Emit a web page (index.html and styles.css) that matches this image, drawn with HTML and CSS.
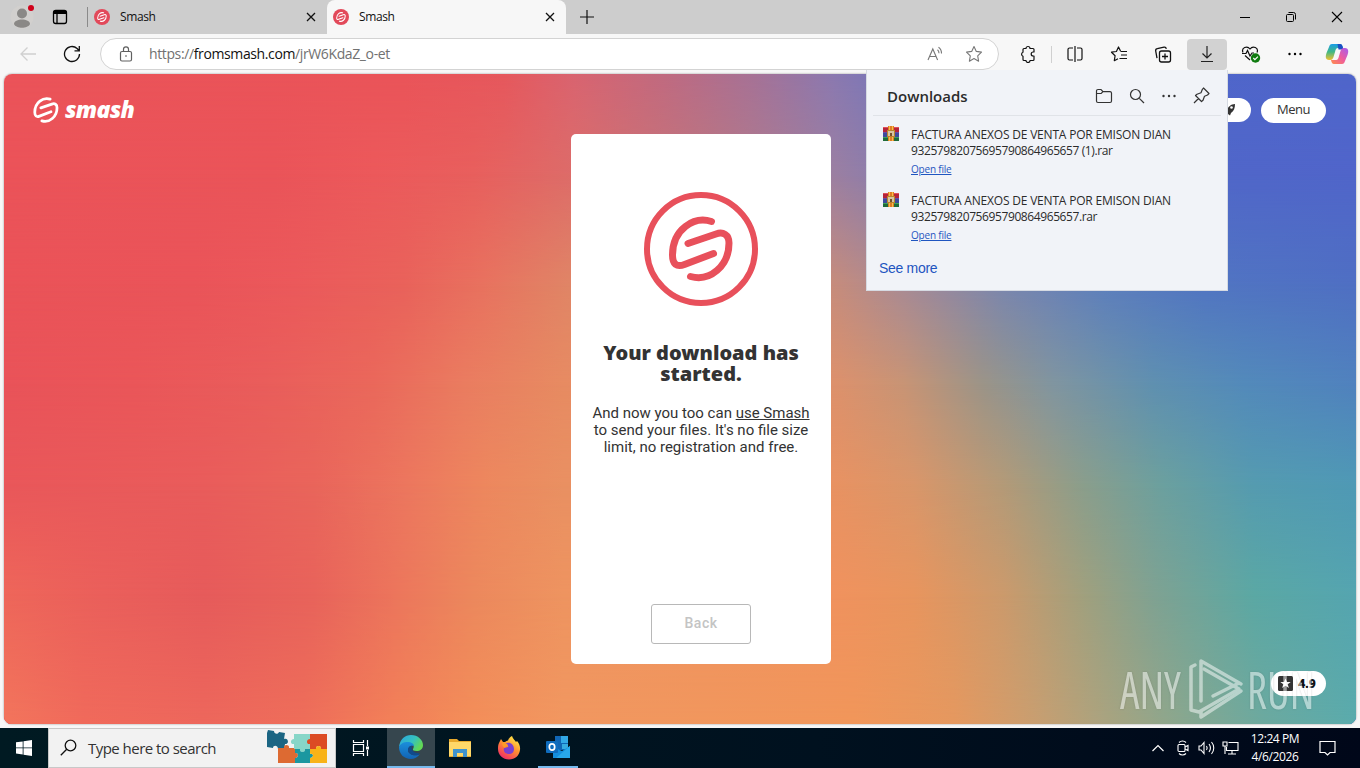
FILE: index.html
```html
<!DOCTYPE html>
<html lang="en">
<head>
  <meta charset="UTF-8" />
  <title>Smash</title>
  <link rel="stylesheet" href="styles.css">
</head>
<body>
  <!-- shared logo -->
  <svg width="0" height="0" class="defs">
    <symbol id="smash" viewBox="0 0 64 66">
      <path d="M42.500 5.500C25 0 3.500 13 3.500 39c0 9 4 12.500 12 9.500l29-11M19 27.500 47 18c7-2.500 13 .5 13 9 0 23-19 39-38.500 33.500" fill="none" stroke="currentColor" stroke-width="7" stroke-linecap="round"/>
    </symbol>
    <symbol id="rar" viewBox="0 0 16 16">
      <path fill="#b5243a" d="M0 1h16v5H0z"/><path fill="#e0505a" d="M0 1h16v1H0z"/>
      <path fill="#3c4a9c" d="M0 6h16v5H0z"/><path fill="#6a4aa0" d="M0 6h16v1H0z"/>
      <path fill="#1f6b3a" d="M0 11h16v4H0z"/><path fill="#3fa05a" d="M0 11h16v1H0z"/>
      <path fill="#e07c25" d="M5 0h6v15H5z"/><path fill="#f5c04a" d="M6 0h1v15H6zM9 0h1v15H9z"/>
      <path fill="#b8862e" d="M4 4h8v7H4z"/><path fill="#d8c4a0" d="M5 5h6v5H5z"/><path fill="#75502a" d="M7 7h2v3H7z"/>
    </symbol>
  </svg>

  <!-- tab strip -->
  <div class="tabstrip">
    <div class="profile">
      <svg width="24" height="24" viewBox="0 0 24 24"><circle cx="12" cy="12" r="11.500" fill="#d2d0ce"/><circle cx="12" cy="8.500" r="5" fill="#8a8886"/><path d="M4 19c0-6 16-6 16 0-2 5-14 5-16 0z" fill="#8a8886"/></svg>
      <span class="dot"></span>
    </div>
    <div class="tab-actions">
      <svg width="16" height="16" viewBox="0 0 16 16" fill="none" stroke="#000" stroke-width="1.300"><rect x="1.500" y="1.500" width="13" height="13" rx="2.200"/><path d="M2 3.500h12" stroke-width="3"/><path d="M5 4v10"/></svg>
    </div>
    <div class="tab">
      <span class="favicon"><svg width="10" height="10"><use href="#smash"/></svg></span>
      <span class="tab-title">Smash</span>
      <svg class="tab-close" width="10" height="10" viewBox="0 0 10 10"><path d="M1 1l8 8M9 1L1 9" stroke="#111" stroke-width="1.300"/></svg>
    </div>
    <div class="tab active">
      <span class="favicon"><svg width="10" height="10"><use href="#smash"/></svg></span>
      <span class="tab-title">Smash</span>
      <svg class="tab-close" width="10" height="10" viewBox="0 0 10 10"><path d="M1 1l8 8M9 1L1 9" stroke="#111" stroke-width="1.300"/></svg>
    </div>
    <div class="new-tab">
      <svg width="14" height="14" viewBox="0 0 14 14"><path d="M7 0v14M0 7h14" stroke="#111" stroke-width="1.200"/></svg>
    </div>
    <div class="window-controls">
      <span><svg width="12" height="12" viewBox="0 0 12 12"><path d="M1 6.500h10" stroke="#000"/></svg></span>
      <span><svg width="12" height="12" viewBox="0 0 12 12" fill="none" stroke="#000"><rect x="1.500" y="3.500" width="7" height="7" rx="1"/><path d="M3.500 1.500h5a2 2 0 0 1 2 2v5"/></svg></span>
      <span><svg width="12" height="12" viewBox="0 0 12 12"><path d="M1 1l10 10M11 1L1 11" stroke="#000" stroke-width="1.100"/></svg></span>
    </div>
  </div>

  <!-- toolbar -->
  <div class="toolbar">
    <div class="nav-btn back"><svg width="18" height="16" viewBox="0 0 18 16" fill="none" stroke="#d0d0d0" stroke-width="1.300"><path d="M17 8H2M8.500 1.500 2 8l6.500 6.500"/></svg></div>
    <div class="nav-btn reload"><svg width="18" height="18" viewBox="0 0 18 18" fill="none" stroke="#111" stroke-width="1.300"><path d="M16.500 9a7.500 7.500 0 1 1-2.400-5.500L16 5.500M16.300 1v4.800h-4.800"/></svg></div>
    <div class="address">
      <svg width="14" height="16" viewBox="0 0 14 16" fill="none" stroke="#606060" stroke-width="1.200"><rect x="1.500" y="5.500" width="11" height="9.500" rx="1.500"/><path d="M4.500 5.500V3.300a2.500 2.500 0 0 1 5 0v2.200"/><circle cx="7" cy="10" r=".8" fill="#444" stroke="none"/></svg>
      <span class="url">https://<b>fromsmash.com</b>/jrW6KdaZ_o-et</span>
      <svg class="read" width="17" height="16" viewBox="0 0 17 16" fill="none" stroke="#777" stroke-width="1.100"><path d="M1 14 5.800 3l4.800 11M2.700 10.500h6.200M10.500 3.800c1 .8 1.500 2 1.500 3.500M11.500 1.200c2 1.300 3 3.500 3 6.300"/></svg>
      <svg width="18" height="18" viewBox="0 0 18 18" fill="none" stroke="#777" stroke-width="1.100" stroke-linejoin="round"><path d="M9 1.500l2.300 4.900 5.200.7-3.800 3.700.9 5.400L9 13.600l-4.600 2.600.9-5.400L1.500 7.100l5.200-.7z"/></svg>
    </div>
    <div class="tool ext"><svg width="17" height="18" viewBox="0 0 17 18" fill="none" stroke="#111" stroke-width="1.200" stroke-linejoin="round"><path d="M5 3.500h2a2 2 0 0 1 4 0h3a1 1 0 0 1 1 1V7h-.8a2 2 0 0 0 0 4h.8v3.500a1 1 0 0 1-1 1h-3a2 2 0 0 1-4 0H5a1 1 0 0 1-1-1v-3.200a2.200 2.200 0 0 1 0-4.100V4.500a1 1 0 0 1 1-1z"/></svg></div>
    <div class="tool-sep"></div>
    <div class="tool"><svg width="18" height="18" viewBox="0 0 18 18" fill="none" stroke="#111" stroke-width="1.200"><path d="M7 3H3.500A1.500 1.500 0 0 0 2 4.500v9A1.500 1.500 0 0 0 3.500 15H7M11 3h3.500A1.500 1.500 0 0 1 16 4.500v9a1.500 1.500 0 0 1-1.500 1.500H11M9 1v16"/></svg></div>
    <div class="tool"><svg width="18" height="18" viewBox="0 0 18 18" fill="none" stroke="#111" stroke-width="1.200" stroke-linejoin="round"><path d="M10.500 6 8.500 2 6.400 6.500 1.500 7.200l3.600 3.500-.8 5 3.700-2M10.500 6.500H17M11 10h6M9.500 13.500H17"/></svg></div>
    <div class="tool"><svg width="18" height="18" viewBox="0 0 18 18" fill="none" stroke="#111" stroke-width="1.300"><path d="M3 13.200 1.700 6A2 2 0 0 1 3.300 3.700L10 2.200a2 2 0 0 1 2.300 1.600"/><rect x="5.500" y="6" width="11" height="11" rx="2"/><path d="M11 8.500v6M8 11.500h6"/></svg></div>
    <div class="tool download"><svg width="14" height="18" viewBox="0 0 14 18" fill="none" stroke="#222" stroke-width="1.200"><path d="M7 1v12M2.500 8.500 7 13l4.500-4.500M1 16.500h12"/></svg></div>
    <div class="tool health"><svg width="20" height="18" viewBox="0 0 20 18" fill="none" stroke="#111" stroke-width="1.200"><path d="M2 7.500C0 3 6 0 9 4c3-4 9-1 7 3.500M1 8.500h4l1.500-3L9 11l2-3h2M4 10.500l5 4.500"/><circle cx="14.500" cy="13" r="4.700" fill="#107c10" stroke="none"/><path d="m12.300 13 1.600 1.600 3-3" stroke="#fff"/></svg></div>
    <div class="tool"><svg width="16" height="4" viewBox="0 0 16 4"><circle cx="2.500" cy="2" r="1.200"/><circle cx="8" cy="2" r="1.200"/><circle cx="13.500" cy="2" r="1.200"/></svg></div>
    <div class="tool copilot">
      <svg width="24" height="22" viewBox="0 0 24 22">
        <defs>
          <linearGradient id="cpA" x1="0" y1="0" x2="0" y2="1"><stop offset="0" stop-color="#199de8"/><stop offset=".5" stop-color="#42b883"/><stop offset="1" stop-color="#f0c030"/></linearGradient>
          <linearGradient id="cpB" x1="1" y1="0" x2="0" y2="1"><stop offset="0" stop-color="#a55cf0"/><stop offset=".5" stop-color="#ee5b9e"/><stop offset="1" stop-color="#ff8f4a"/></linearGradient>
        </defs>
        <path d="M7 1h8c2 0 2.500 2 3 4h-5c-2 0-2.500 2-3 4l-1.500 5C7.500 17 6 17 4 17c-4 0-3.500-4-2.500-7L4 4c.6-1.800 1.300-3 3-3z" fill="url(#cpA)"/>
        <path d="M12.500 1H15c2 0 2.500 2 3 4l.5 1.500h-5z" fill="#1b4fc4"/>
        <path d="M17 21H9c-2 0-2.500-2-3-4h5c2 0 2.500-2 3-4l1.500-5c1-3 2.500-3 4.500-3 4 0 3.500 4 2.500 7L20 18c-.6 1.800-1.300 3-3 3z" fill="url(#cpB)"/>
      </svg>
    </div>
  </div>

  <!-- web page -->
  <main class="page">
    <div class="glow g1"></div>
    <div class="glow g2"></div>
    <div class="glow g3"></div>
    <div class="glow g4"></div>
    <div class="glow g5"></div>
    <div class="glow g6"></div>
    <div class="glow g7"></div>

    <div class="brand">
      <svg width="26" height="26"><use href="#smash"/></svg>
      <span>smash</span>
    </div>

    <section class="card">
      <div class="logo-ring"><svg width="64" height="66"><use href="#smash"/></svg></div>
      <h1>Your download has<br>started.</h1>
      <p>And now you too can <a>use Smash</a><br>to send your files. It's no file size<br>limit, no registration and free.</p>
      <button class="back-btn">Back</button>
    </section>

    <div class="side">
      <div class="side-top">
        <span class="pill rocket"><svg width="12" height="14" viewBox="0 0 12 14"><path d="M11 1C7 1 4 4 3 7L1 8l1.500 1L2 12.500l2-1.500 2 1.500L7 10c3-2 4-5 4-9z" fill="#333"/><circle cx="7.500" cy="4.500" r="1.300" fill="#fff"/></svg></span>
        <span class="pill menu">Menu</span>
      </div>
      <span class="pill rating">
        <svg width="15" height="15" viewBox="0 0 15 15"><rect width="15" height="15" rx="1.500" fill="#333"/><path d="M7.500 2.500 9 6h3.700l-3 2.300 1.200 3.700-3.400-2.200L4.100 12l1.200-3.700L2.300 6H6z" fill="#fff"/></svg>
        4.9
      </span>
    </div>

    <div class="watermark">
      <span>ANY</span>
      <svg width="56" height="62" viewBox="0 0 56 62" fill="none" stroke="#fff" stroke-width="3.500" stroke-linejoin="round" stroke-linecap="round"><path d="M7 7 3 9v43l8 2 40-23-35-20"/><path d="M13 43V3l40 23M25 38l26-13M13 59l40-26M13 59v-5"/></svg>
      <span>RUN</span>
    </div>
  </main>

  <!-- downloads flyout -->
  <aside class="downloads">
    <header>
      <h2>Downloads</h2>
      <svg width="18" height="16" viewBox="0 0 18 16" fill="none" stroke="#333" stroke-width="1.200"><path d="M1.500 3A1.500 1.500 0 0 1 3 1.500h3L8 3.700h7A1.500 1.500 0 0 1 16.500 5v8a1.500 1.500 0 0 1-1.500 1.500H3A1.500 1.500 0 0 1 1.500 13zM1.500 5.500h4.700L8 3.700"/></svg>
      <svg width="16" height="16" viewBox="0 0 16 16" fill="none" stroke="#333" stroke-width="1.200"><circle cx="6.500" cy="6.500" r="5"/><path d="m10.300 10.300 4.700 4.700"/></svg>
      <svg width="16" height="16" viewBox="0 0 16 16" fill="#333"><circle cx="2.500" cy="8" r="1.200"/><circle cx="8" cy="8" r="1.200"/><circle cx="13.500" cy="8" r="1.200"/></svg>
      <svg width="17" height="17" viewBox="0 0 17 17" fill="none" stroke="#333" stroke-width="1.200" stroke-linejoin="round"><path d="m10.500 1 5.500 5.500-1.500 1.500-3 1.200-1.500 4L8.500 14.500l-6-6L4 7.200l4-1.500 1.200-3zM5.500 11.500 1 16"/></svg>
    </header>
    <ul>
      <li>
        <svg width="16" height="16"><use href="#rar"/></svg>
        <div><span class="name">FACTURA ANEXOS DE VENTA POR EMISON DIAN</span><span class="name num">93257982075695790864965657 (1).rar</span><a>Open file</a></div>
      </li>
      <li>
        <svg width="16" height="16"><use href="#rar"/></svg>
        <div><span class="name">FACTURA ANEXOS DE VENTA POR EMISON DIAN</span><span class="name num">93257982075695790864965657.rar</span><a>Open file</a></div>
      </li>
    </ul>
    <a class="more">See more</a>
  </aside>

  <!-- taskbar -->
  <footer class="taskbar">
    <div class="start"><svg width="16" height="16" viewBox="0 0 16 16" fill="#fff"><path d="M0 2.300 6.700 1.400V7.500H0zM7.500 1.300 16 0v7.500H7.500zM0 8.300h6.700v6.200L0 13.600zM7.500 8.300H16V16l-8.500-1.300z"/></svg></div>
    <div class="search">
      <svg width="17" height="17" viewBox="0 0 17 17" fill="none" stroke="#111" stroke-width="1.300"><circle cx="10.500" cy="6.500" r="5.300"/><path d="M6.700 10.300.8 16.200"/></svg>
      <span>Type here to search</span>
      <svg class="puzzle" width="64" height="36" viewBox="0 0 64 36">
        <path fill="#1b6583" d="m4 1 6 1c0 3 4 4 5 1l6 1-1 6c4-2 6 5 1 5l-1 6-6-1c0-4-5-4-5-1l-6-1V4z"/>
        <path fill="#dd6a32" d="M14 19h6c-1-4 6-4 5 0h6v5c4-1 4 5 0 5v5H14z"/>
        <path fill="#87d6c8" d="M30 5h16v15h-5c1 4-6 4-5 0h-6v-5c-4 1-4-5 0-5z"/>
        <path fill="#dc4b24" d="M46 5h17v15h-6c1-4-6-4-5 0h-6v-5c-4 1-4-5 0-5z"/>
        <path fill="#1b97a0" d="M31 20h5c-1 4 6 4 5 0h5v5c4-1 4 4 0 4v5H31v-5c4 0 4-6 0-5z"/>
        <path fill="#f8b318" d="M46 20h6c-1-4 6-4 5 0h6v14H46v-5c4 0 4-5 0-4z"/>
      </svg>
    </div>
    <div class="task"><svg width="18" height="18" viewBox="0 0 18 18" fill="none" stroke="#fff" stroke-width="1.200"><path d="M1.500 1v2.500h10V1M1.500 17v-2.500h10V17M1.500 5.500h10v7h-10zM15.500 1v6M15.500 11v6"/><path d="M14 7.500h3v3h-3z" fill="#fff" stroke="none"/></svg></div>
    <div class="task current">
      <svg width="24" height="24" viewBox="0 0 24 24">
        <defs>
          <linearGradient id="edA" x1="0" y1="0" x2="1" y2=".5"><stop offset="0" stop-color="#2aa5df"/><stop offset=".6" stop-color="#35c1c0"/><stop offset="1" stop-color="#62d855"/></linearGradient>
          <linearGradient id="edB" x1="0" y1="0" x2="0" y2="1"><stop offset="0" stop-color="#1b8fdb"/><stop offset="1" stop-color="#1163b5"/></linearGradient>
        </defs>
        <path d="M0 12C1 4 6 0 12 0c7 0 12 5 12 10 0 4-3 6-6.500 6-3 0-4-1-3.500-2 2-3 0-6-5-6-4 0-7 1-9 4z" fill="url(#edA)"/>
        <path d="M0 12c2-4 5-5 8.500-5 4 0 6.500 2 6.500 4-3-1-6 1-6 4 0 4 5 6 10 5l2-1c-2 3-6 5-9 5C5 24 0 19 0 12z" fill="url(#edB)"/>
        <path d="M9 15c0-3 2-4.500 4-4.300-1.500 4 2 7.300 6 7.300l2 1-2 1c-5 1-10-1-10-5z" fill="#114a8b"/>
      </svg>
    </div>
    <div class="task"><svg width="22" height="18" viewBox="0 0 22 18"><path d="M0 0h8l2 2h12v16H0z" fill="#e8a92c"/><path d="M0 3h22v14H0z" fill="#ffd869"/><path d="M4 18v-8h14v8h-4v-4H8v4z" fill="#3f93ce"/></svg></div>
    <div class="task">
      <svg width="24" height="24" viewBox="0 0 24 24">
        <defs><linearGradient id="ffA" x1=".8" y1="0" x2=".2" y2="1"><stop offset="0" stop-color="#fff04a"/><stop offset=".45" stop-color="#ff9130"/><stop offset="1" stop-color="#f0226b"/></linearGradient></defs>
        <path d="M2 7l2-4 2 3h2c1-1 2-1.500 3-1.500C12 2 13 1 15 0c1 3 3 4 4 6l1-1c2 2 3.500 5 3 9-1 6-5 9.500-11 9.500S1 19 1 13c0-2 0-4 1-6z" fill="url(#ffA)"/>
        <path d="M8 8c4-3 9 0 9 5 0 3-2 5-5 5-4 0-6-3-5-6l4-1c1-1-1-2-3-3z" fill="#7a3fd0"/>
        <path d="M5 7c2-1 4 0 6 2 0 1-3 1.500-3 3-2-1-3-3-3-5z" fill="#ff9a28"/>
      </svg>
    </div>
    <div class="task open">
      <svg width="24" height="22" viewBox="0 0 24 22"><path fill="#1066b5" d="M9 0h13v14H9z"/><path fill="#32a9e7" d="M15 0h7v7h-7z"/><path fill="#50d9ff" d="M16 8h6v5h-6z" opacity=".6"/><path fill="#1490df" d="M7 11l9 4 8-5v12H7z"/><path fill="#28a8ea" d="m24 10-14 12h14z"/><rect y="5" width="12" height="12" rx="1" fill="#0f6cbd"/><ellipse cx="6" cy="11" rx="2.700" ry="3.100" fill="none" stroke="#fff" stroke-width="1.700"/></svg>
    </div>
    <div class="tray">
      <svg width="12" height="8" viewBox="0 0 12 8" fill="none" stroke="#fff" stroke-width="1.200"><path d="m.5 7 5.500-5.500L11.500 7"/></svg>
      <svg width="12" height="16" viewBox="0 0 12 16" fill="none" stroke="#fff" stroke-width="1.100"><rect x="1" y="4.500" width="7" height="7" rx="1"/><path d="m8 7 3-1.500v5L8 9M2 2.500C4 .5 7 .5 9 2.500M2 13.500c2 2 5 2 7 0"/></svg>
      <svg width="17" height="14" viewBox="0 0 17 14" fill="none" stroke="#fff" stroke-width="1.100"><path d="M1 5v4h2l3 3.500v-11L3 5zM8.500 5c.8 1.200.8 2.800 0 4M11 3c1.800 2.500 1.800 5.500 0 8M13.500 1c3 3.500 3 8.500 0 12"/></svg>
      <svg width="17" height="14" viewBox="0 0 17 14" fill="none" stroke="#fff" stroke-width="1.100"><path d="M6.500 1.500h9.500v8H4.500V6M10 9.500v3M6 13h8"/><path d="M1 1h4v4H1zM3 5v8"/></svg>
    </div>
    <div class="clock"><span>12:24 PM</span><span>4/6/2026</span></div>
    <div class="notify"><svg width="17" height="17" viewBox="0 0 17 17" fill="none" stroke="#fff" stroke-width="1.200"><path d="M1 1.500h15v11h-5L8.500 15 6 12.500H1z"/></svg></div>
  </footer>
</body>
</html>
```

FILE: styles.css
```css
* {
  box-sizing: border-box;
}

body {
  margin: 0;
  width: 1360px;
  height: 768px;
  overflow: hidden;
  display: flex;
  flex-direction: column;
  background: #f7f7f7;
  font-family: "Open Sans", "Noto Sans", sans-serif;
  color: #111;
  position: relative;
}

svg {
  display: block;
  flex: none;
}

.defs {
  position: absolute;
}

/* tab strip */
.tabstrip {
  height: 34px;
  flex: none;
  display: flex;
  align-items: center;
  background: #cdcdcd;
}

.profile {
  position: relative;
  margin-left: 10px;
}

.dot {
  position: absolute;
  top: 0;
  right: 0;
  width: 6px;
  height: 6px;
  border-radius: 50%;
  background: #d0021b;
}

.tab-actions {
  margin-left: 18px;
  padding-right: 19px;
  height: 20px;
  display: flex;
  align-items: center;
  border-right: 1px solid #8a8a8a;
}

.tab {
  width: 239px;
  height: 34px;
  padding: 0 11px 0 6px;
  display: flex;
  align-items: center;
}

.tab.active {
  background: #f7f7f7;
  border-radius: 8px 8px 0 0;
}

.favicon {
  width: 16px;
  height: 16px;
  border-radius: 50%;
  background: #e2495a;
  color: #fff;
  display: flex;
  align-items: center;
  justify-content: center;
}

.tab-title {
  flex: 1;
  margin: -2px 0 0 10px;
  font-size: 12px;
  letter-spacing: -0.4px;
}

.new-tab {
  margin-left: 14px;
}

.window-controls {
  margin-left: auto;
  display: flex;
}

.window-controls span {
  width: 46px;
  display: flex;
  justify-content: center;
}

/* toolbar */
.toolbar {
  height: 40px;
  flex: none;
  display: flex;
  align-items: center;
}

.nav-btn {
  width: 44px;
  display: flex;
  justify-content: center;
}

.back {
  margin-left: 6px;
}

.reload {
  margin-right: 6px;
}

.address {
  width: 899px;
  height: 32px;
  padding: 0 15px 0 18px;
  display: flex;
  align-items: center;
  background: #fff;
  border: 1px solid #d3d3d3;
  border-radius: 16px;
}

.url {
  flex: 1;
  margin: -2px 0 0 16px;
  font-size: 14px;
  letter-spacing: -0.38px;
  color: #717171;
}

.url b {
  font-weight: normal;
  color: #111;
}

.read {
  margin-right: 21px;
}

.tool {
  width: 40px;
  height: 31px;
  margin-right: 4px;
  flex: none;
  display: flex;
  align-items: center;
  justify-content: center;
}

.ext {
  margin: 0 4px 0 8px;
}

.tool-sep {
  width: 1px;
  height: 17px;
  margin-right: 3px;
  flex: none;
  background: #d0d0d0;
}

.download {
  background: #d2d2d2;
  border-radius: 4px;
}

.copilot {
  width: 36px;
  margin: 0;
}

/* web page */
.page {
  position: relative;
  height: 650px;
  margin: 0 4px;
  flex: none;
  overflow: hidden;
  border-radius: 8px;
  box-shadow: 0 0 2px #888;
}

/* background: horizontal blends that fade into each other downwards */
.glow {
  position: absolute;
  inset: 0;
}

.g1 {
  background: linear-gradient(90deg, #eb5359 0, #ea5459 400px, #e6585d 500px, #d96470 570px, #c06a80 660px, #a67296 750px, #8b79b0 830px, #7276bc 900px, #5a6bc6 1000px, #5066ca 1100px, #4f65cb 1352px);
}

.g2 {
  background: linear-gradient(90deg, #eb5359 0, #ea5459 270px, #ec595b 370px, #e85f5d 470px, #dd6c69 568px, #bd7680 700px, #9b7fa2 830px, #7a7ab6 930px, #5c70c2 1030px, #5067c8 1150px, #5065ca 1352px);
  -webkit-mask-image: linear-gradient(transparent 0, #000 100px);
}

.g3 {
  background: linear-gradient(90deg, #ea5358 0, #ea5459 190px, #eb595b 290px, #e9625b 400px, #e8725f 480px, #e08566 565px, #d78a70 700px, #c68c7c 830px, #a88a94 900px, #7a86ae 1000px, #5d7fbc 1100px, #5175c2 1200px, #4f6fc3 1352px);
  -webkit-mask-image: linear-gradient(transparent 100px, #000 210px);
}

.g4 {
  background: linear-gradient(90deg, #e95359 0, #ea5659 130px, #e95d5b 260px, #ea685b 370px, #ea7c60 460px, #e78b62 560px, #e4906a 740px, #dd916c 830px, #c89475 900px, #9b9488 980px, #8095a0 1050px, #5f90b0 1150px, #538aba 1240px, #5082be 1352px);
  -webkit-mask-image: linear-gradient(transparent 210px, #000 310px);
}

.g5 {
  background: linear-gradient(90deg, #e9575a 0, #e95c5b 200px, #e9655b 310px, #ec765e 400px, #ed875e 480px, #e99062 560px, #e89262 830px, #d9966a 910px, #b39a78 1000px, #8a9e8c 1080px, #6ba09f 1160px, #559bb0 1250px, #4f99b5 1352px);
  -webkit-mask-image: linear-gradient(transparent 310px, #000 410px);
}

.g6 {
  background: linear-gradient(90deg, #ee665a 0, #ea5f5b 100px, #e65b5b 200px, #e8635b 310px, #ec755c 390px, #ec885d 470px, #ee9460 560px, #f0925e 830px, #e8955e 910px, #cb9a6c 1000px, #a0a07e 1080px, #7fa292 1150px, #5ba8a4 1250px, #55a5b0 1352px);
  -webkit-mask-image: linear-gradient(transparent 410px, #000 520px);
}

.g7 {
  background: linear-gradient(90deg, #f2755c 0, #f06a5b 80px, #ed675c 200px, #ee6e5a 300px, #f28058 390px, #f38e59 470px, #f19760 560px, #f1965a 850px, #e5985f 950px, #c99e70 1030px, #aaa37f 1100px, #88a78f 1180px, #6ca99f 1260px, #5aabac 1352px);
  -webkit-mask-image: linear-gradient(transparent 520px, #000 650px);
}

.brand {
  position: absolute;
  left: 29px;
  top: 22px;
  display: flex;
  align-items: center;
  gap: 6px;
  color: #fff;
}

.brand span {
  font: italic 800 23px/27px "Open Sans", sans-serif;
  letter-spacing: -0.7px;
}

.card {
  position: relative;
  width: 260px;
  height: 530px;
  margin: 60px 0 0 567px;
  padding: 58px 0 20px;
  display: flex;
  flex-direction: column;
  align-items: center;
  text-align: center;
  background: #fff;
  border-radius: 5px;
  color: #333;
}

.logo-ring {
  width: 114px;
  height: 114px;
  display: flex;
  align-items: center;
  justify-content: center;
  border: 6px solid #e8505b;
  border-radius: 50%;
  color: #e8505b;
}

.card h1 {
  margin: 36px 0 0;
  font: 900 20px/21px "Noto Sans", sans-serif;
}

.card p {
  margin: 21px 0 0;
  font: 15px/17px Roboto, sans-serif;
  white-space: nowrap;
}

.card a {
  text-decoration: underline;
}

.back-btn {
  width: 100px;
  height: 40px;
  margin-top: auto;
  padding: 0 0 2px;
  background: #fff;
  border: 1px solid #b8b8b8;
  border-radius: 3px;
  color: #c4c4c4;
  font: 500 14px Roboto, sans-serif;
  letter-spacing: 0.5px;
}

.side {
  position: absolute;
  right: 30px;
  top: 24px;
  bottom: 28px;
  display: flex;
  flex-direction: column;
  justify-content: space-between;
  align-items: flex-end;
}

.side-top {
  display: flex;
  gap: 10px;
}

.pill {
  height: 25px;
  display: flex;
  align-items: center;
  justify-content: center;
  background: #fff;
  border-radius: 13px;
  color: #333;
}

.rocket {
  width: 60px;
  height: 24px;
  justify-content: flex-end;
  padding-right: 15px;
}

.menu {
  width: 65px;
  padding-bottom: 3px;
  font-size: 13px;
  letter-spacing: -0.5px;
}

.rating {
  width: 55px;
  padding-right: 3px;
  gap: 5px;
  font-size: 12px;
  font-weight: 800;
  color: #111;
}

.watermark {
  position: absolute;
  right: 44px;
  bottom: 4px;
  display: flex;
  align-items: center;
  gap: 3px;
  opacity: 0.5;
  color: #fff;
  text-shadow: 0 0 2px rgba(60, 60, 60, 0.5);
}

.watermark span {
  width: 65px;
  font: 51px/60px "Open Sans", sans-serif;
  font-stretch: 75%;
  transform: scaleX(0.86);
  transform-origin: 0 50%;
}

/* downloads flyout */
.downloads {
  position: absolute;
  left: 866px;
  top: 70px;
  width: 362px;
  height: 221px;
  background: #f1f3f8;
  border: 1px solid #d6dae2;
  border-top: 0;
}

.downloads header {
  height: 46px;
  margin: 0 6px;
  padding: 6px 11px 0 14px;
  display: flex;
  align-items: center;
  gap: 16px;
  border-bottom: 1px solid #e0e3e8;
}

.downloads h2 {
  flex: 1;
  margin: 0;
  font-size: 15px;
  font-weight: 600;
  color: #2b2b2b;
}

.downloads ul {
  margin: 10px 0 0;
  padding: 0 0 0 16px;
  list-style: none;
}

.downloads li {
  height: 66px;
  display: flex;
  gap: 12px;
}

.downloads li div {
  padding-top: 1px;
  display: flex;
  flex-direction: column;
  align-items: flex-start;
}

.name {
  font-size: 12px;
  line-height: 16px;
  letter-spacing: -0.19px;
  color: #2b2b2b;
  white-space: nowrap;
}

.num {
  letter-spacing: -0.4px;
}

.downloads a {
  margin-top: 4px;
  font-size: 10px;
  line-height: 12px;
  letter-spacing: -0.2px;
  color: #1f55c0;
  text-decoration: underline;
}

.downloads .more {
  display: block;
  margin: 2px 0 0 12px;
  font: 14px/16px "Liberation Sans", sans-serif;
  letter-spacing: -0.3px;
  text-decoration: none;
}

/* taskbar */
.taskbar {
  height: 40px;
  margin-top: 4px;
  flex: none;
  display: flex;
  align-items: center;
  background: linear-gradient(90deg, #001a22, #00111f 60%, #000719);
}

.start {
  width: 48px;
  display: flex;
  justify-content: center;
}

.search {
  width: 288px;
  height: 40px;
  padding: 0 7px 2px 11px;
  display: flex;
  align-items: center;
  background: #f2f2f2;
  border: 1px solid #c8c8c8;
  color: #333;
}

.search span {
  flex: 1;
  margin: 2px 0 0 11px;
  font-size: 15px;
  letter-spacing: -0.53px;
}

.task {
  width: 49px;
  height: 40px;
  display: flex;
  align-items: center;
  justify-content: center;
}

.current {
  width: 48px;
  margin-left: 2px;
  background: #36464e;
  border-bottom: 2px solid #76b9ed;
}

.open {
  width: 40px;
  margin-left: 5px;
  border-bottom: 2px solid #76b9ed;
}

.tray {
  margin-left: auto;
  display: flex;
  align-items: center;
  gap: 11px;
}

.tray svg:nth-child(2) {
  margin-left: 2px;
}

.tray svg:nth-child(3) {
  margin-right: -4px;
  margin-left: -2px;
}

.clock {
  width: 72px;
  display: flex;
  flex-direction: column;
  align-items: center;
  font-size: 12px;
  line-height: 18px;
  letter-spacing: -0.4px;
  color: #fff;
}

.notify {
  width: 49px;
  height: 40px;
  padding-left: 8px;
  display: flex;
  align-items: center;
}
```
